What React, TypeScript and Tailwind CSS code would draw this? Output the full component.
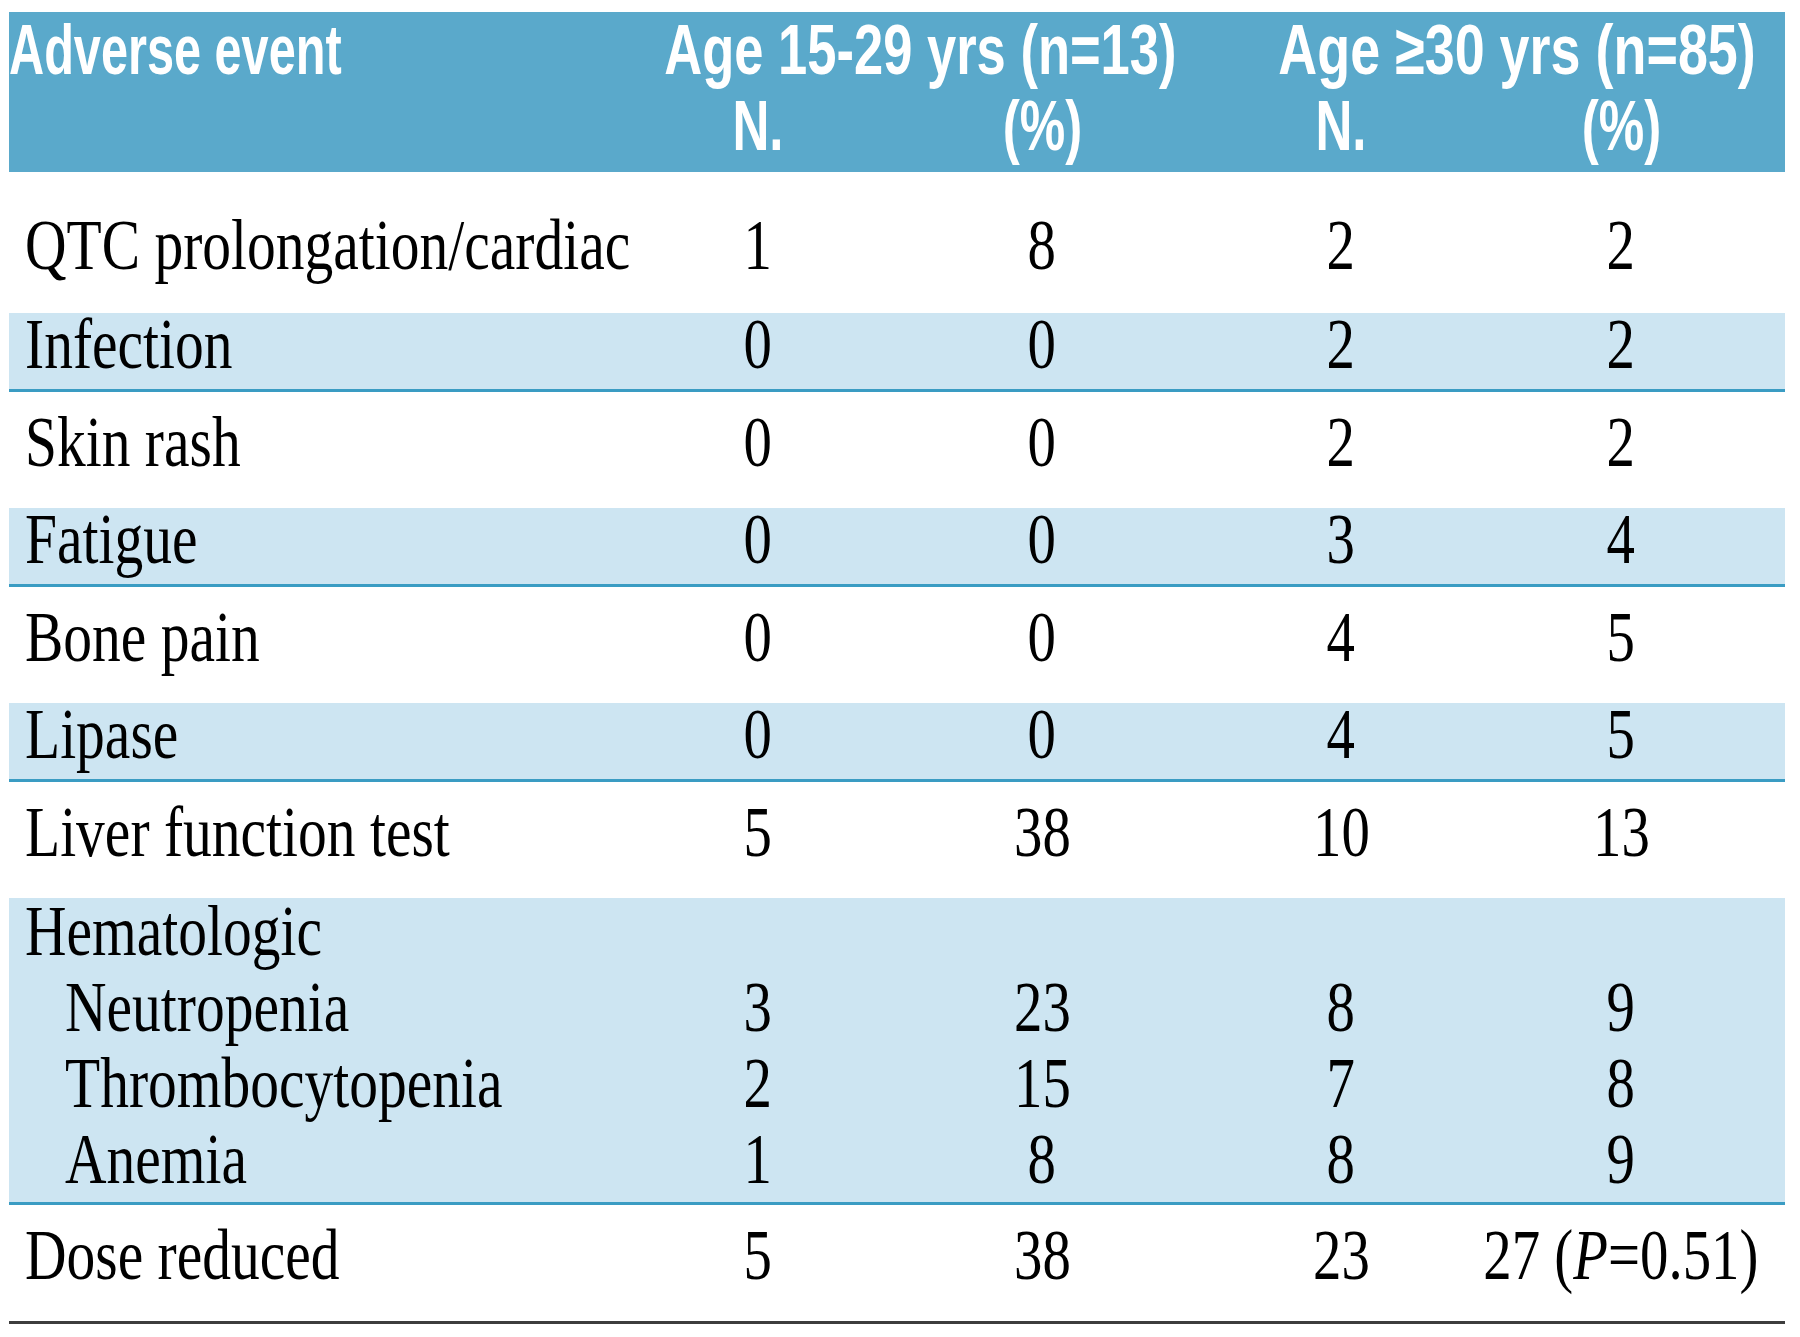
import React from "react";

const GRID = "grid grid-cols-[607px_284px_284px_314px_246px_41px]";

type RowProps = {
  label: React.ReactNode;
  values: React.ReactNode[];
  blue?: boolean;
  pad: string;
};

function Num({ v }: { v: React.ReactNode }) {
  return (
    <div className="flex justify-center whitespace-nowrap">
      <span className="inline-block scale-x-[0.8]">{v}</span>
    </div>
  );
}

function Label({ children, indent }: { children: React.ReactNode; indent?: boolean }) {
  return (
    <div className={indent ? "whitespace-nowrap pl-[56px]" : "whitespace-nowrap pl-[16px]"}>
      <span className="inline-block origin-left scale-x-[0.81]">{children}</span>
    </div>
  );
}

function Row({ label, values, blue, pad }: RowProps) {
  return (
    <div
      className={
        (blue ? "bg-[#cde5f2] border-b-[3px] border-[#3a9cc3] leading-[62px] " : "bg-white leading-[62px] ") +
        GRID +
        " " +
        pad
      }
    >
      <Label>{label}</Label>
      {values.map((v, i) => (
        <Num key={i} v={v} />
      ))}
      <div />
    </div>
  );
}

export default function App() {
  return (
    <div className="min-h-[1337px] w-[1800px] bg-white pt-[12px] pl-[9px]">
      <div className="w-[1776px]">
        {/* Header */}
        <div className="bg-[#5aa9cb] pb-[8px] font-['Liberation_Sans',Arial,sans-serif] text-[70px] font-bold leading-[76px] text-white">
          <div className={GRID}>
            <div className="whitespace-nowrap">
              <span className="inline-block origin-left scale-x-[0.695]">Adverse event</span>
            </div>
            <div className="col-span-2 flex justify-center whitespace-nowrap pl-[40px]">
              <span className="inline-block scale-x-[0.75]">Age 15-29 yrs (n=13)</span>
            </div>
            <div className="col-span-3 flex justify-center whitespace-nowrap pl-[66px]">
              <span className="inline-block scale-x-[0.77]">Age ≥30 yrs (n=85)</span>
            </div>
          </div>
          <div className={GRID}>
            <div />
            <div className="flex justify-center">
              <span className="inline-block scale-x-[0.73]">N.</span>
            </div>
            <div className="flex justify-center">
              <span className="inline-block scale-x-[0.73]">(%)</span>
            </div>
            <div className="flex justify-center">
              <span className="inline-block scale-x-[0.73]">N.</span>
            </div>
            <div className="flex justify-center">
              <span className="inline-block scale-x-[0.73]">(%)</span>
            </div>
            <div />
          </div>
        </div>

        {/* Body */}
        <div className="font-['Liberation_Serif','Times_New_Roman',serif] text-[71px] text-black">
          <Row label="QTC prolongation/cardiac" values={["1", "8", "2", "2"]} pad="pt-[42px] pb-[37px]" />
          <Row label="Infection" values={["0", "0", "2", "2"]} blue pad="pb-[14px]" />
          <Row label="Skin rash" values={["0", "0", "2", "2"]} pad="pt-[19px] pb-[35px]" />
          <Row label="Fatigue" values={["0", "0", "3", "4"]} blue pad="pb-[14px]" />
          <Row label="Bone pain" values={["0", "0", "4", "5"]} pad="pt-[19px] pb-[35px]" />
          <Row label="Lipase" values={["0", "0", "4", "5"]} blue pad="pb-[14px]" />
          <Row label="Liver function test" values={["5", "38", "10", "13"]} pad="pt-[19px] pb-[35px]" />

          {/* Hematologic group */}
          <div className="flex flex-col gap-[10px] border-b-[3px] border-[#3a9cc3] bg-[#cde5f2] pb-[10px] leading-[66px]">
            <div className={GRID}>
              <Label>Hematologic</Label>
              <div />
              <div />
              <div />
              <div />
              <div />
            </div>
            {[
              ["Neutropenia", "3", "23", "8", "9"],
              ["Thrombocytopenia", "2", "15", "7", "8"],
              ["Anemia", "1", "8", "8", "9"],
            ].map((r) => (
              <div key={r[0]} className={GRID}>
                <Label indent>{r[0]}</Label>
                <Num v={r[1]} />
                <Num v={r[2]} />
                <Num v={r[3]} />
                <Num v={r[4]} />
                <div />
              </div>
            ))}
          </div>

          <Row
            label="Dose reduced"
            values={[
              "5",
              "38",
              "23",
              <>
                27 (<i>P</i>=0.51)
              </>,
            ]}
            pad="pt-[19px] pb-[35px]"
          />
          <div className="h-[3px] bg-[#3d3d3d]" />
        </div>
      </div>
    </div>
  );
}
